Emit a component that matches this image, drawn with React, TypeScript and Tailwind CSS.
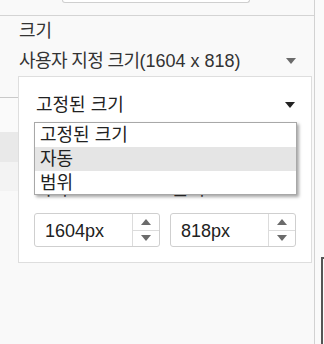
import { ReactNode } from 'react';

const FONT = "font-['Liberation_Sans','Noto_Sans_CJK_KR',sans-serif]";

function Caret({ className = '' }: { className?: string }) {
  return (
    <svg width="10" height="6" viewBox="0 0 10 6" className={className}>
      <path d="M0 0H10L5 6Z" fill="currentColor" />
    </svg>
  );
}

function SpinInput({ value }: { value: string }) {
  return (
    <div className="flex h-[34px] w-[126px] rounded-[3px] border border-[#cfcfcf] bg-white">
      <div className="flex-1 pl-[10px] pt-[1px] leading-[32px] text-[#222]">{value}</div>
      <div className="flex w-[27px] flex-col border-l border-[#dcdcdc]">
        <div className="flex flex-1 items-center justify-center border-b border-[#dcdcdc]">
          <Caret className="rotate-180 text-[#6b6b6b]" />
        </div>
        <div className="flex flex-1 items-center justify-center">
          <Caret className="text-[#6b6b6b]" />
        </div>
      </div>
    </div>
  );
}

function Option({ children, active }: { children: ReactNode; active?: boolean }) {
  return (
    <div className={`h-[24px] pl-[5px] leading-[24px] text-[#222] ${active ? 'bg-[#e5e5e5]' : ''}`}>
      {children}
    </div>
  );
}

export default function App() {
  return (
    <div className={`flex h-[344px] w-[324px] overflow-hidden bg-[#f9f9f9] text-[18px] ${FONT}`}>
      <div className="flex w-[315px] flex-col border-r border-[#d2d2d2]">
        {/* top strip */}
        <div className="h-[16px] border-b border-[#d4d4d4]">
          <div className="ml-[62px] h-[3px] w-[188px] rounded-b-[3px] border border-t-0 border-[#cfcfcf] bg-white" />
        </div>

        <div className="pt-[3px]">
          <div className="h-[30px] pl-[19px] leading-[24px] text-[#333]">크기</div>
          <div className="flex h-[27px] items-start pl-[19px] pr-[18px] leading-[24px] text-[#333]">
            <span className="flex-1">
              <span className="tracking-[-0.6px]">사용자 지정 크기</span>(1604 x 818)
            </span>
            <Caret className="mt-[9px] text-[#6b6b6b]" />
          </div>
        </div>

        <div className="flex">
          {/* list behind the panel */}
          <div className="flex w-[18px] flex-col">
            <div className="h-[21px]" />
            <div className="h-[35px] border-t border-[#c9c9c9] bg-[#fafafa]" />
            <div className="h-[30px] bg-[#e9e9e9]" />
            <div className="h-[29px] bg-[#f3f3f3]" />
          </div>

          {/* panel */}
          <div className="w-[294px] border border-[#dedede] bg-white px-[15px] pb-[15px] pt-[11px]">
            <div className="relative">
              <div className="flex h-[34px] items-center pl-[2px] pr-[1px] leading-[34px] text-[#222]">
                <span className="flex-1">고정된 크기</span>
                <Caret className="text-[#222]" />
              </div>
              <div className="absolute left-0 top-full z-10 w-[263px] border border-[#a8a8a8] bg-white shadow-[2px_2px_3px_rgba(0,0,0,0.35)]">
                <Option>고정된 크기</Option>
                <Option active>자동</Option>
                <div className="h-[23px] pl-[5px] leading-[24px] text-[#222]">범위</div>
              </div>
            </div>

            <div className="mt-[55px] flex h-[24px] gap-[10px] leading-[24px] text-[#333]">
              <div className="w-[126px] pl-[1px]">너비</div>
              <div className="w-[126px] pl-[2px]">높이</div>
            </div>

            <div className="mt-[12px] flex gap-[10px]">
              <SpinInput value="1604px" />
              <SpinInput value="818px" />
            </div>
          </div>
        </div>
      </div>

      {/* right strip */}
      <div className="flex-1 bg-[#fafafa]">
        <div className="ml-[6px] mt-[257px] h-[100px] border-l-2 border-t-2 border-[#555]" />
      </div>
    </div>
  );
}
